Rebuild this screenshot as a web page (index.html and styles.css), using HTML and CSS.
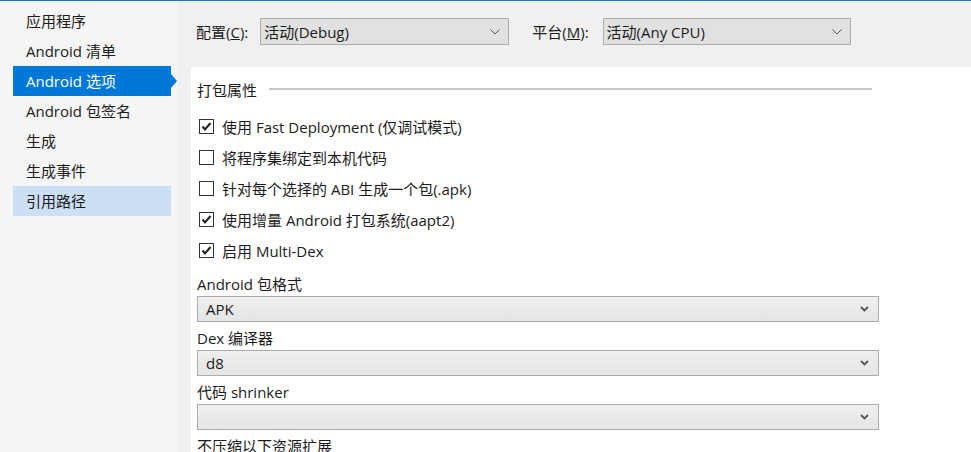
FILE: index.html
```html
<!DOCTYPE html>
<html lang="zh-CN">
<head>
<meta charset="utf-8">
<title>Android 选项</title>
<link rel="stylesheet" href="styles.css">
</head>
<body>
<div class="topline"></div>
<div class="app">
  <nav class="sidebar">
    <div class="nav-item">应用程序</div>
    <div class="nav-item">Android 清单</div>
    <div class="nav-item active">Android 选项</div>
    <div class="nav-item">Android 包签名</div>
    <div class="nav-item">生成</div>
    <div class="nav-item">生成事件</div>
    <div class="nav-item hover">引用路径</div>
  </nav>
  <main class="main">
    <div class="toolbar">
      <span class="tb-label">配置(<u>C</u>):</span>
      <div class="tb-select sel-config">
        <span>活动(Debug)</span>
        <svg class="tb-chev" width="10" height="6" viewBox="0 0 10 6"><polyline points="0.5,0.5 5,5 9.5,0.5" fill="none" stroke="#555" stroke-width="1"/></svg>
      </div>
      <span class="tb-label platform">平台(<u>M</u>):</span>
      <div class="tb-select sel-platform">
        <span>活动(Any CPU)</span>
        <svg class="tb-chev" width="10" height="6" viewBox="0 0 10 6"><polyline points="0.5,0.5 5,5 9.5,0.5" fill="none" stroke="#555" stroke-width="1"/></svg>
      </div>
    </div>
    <div class="rule"></div>
    <div class="panel">
      <div class="section-head">
        <span>打包属性</span>
        <div class="section-line"></div>
      </div>
      <div class="check-row">
        <span class="box checked"><svg width="13" height="13" viewBox="0 0 13 13"><polyline points="2.5,6.5 5,9.5 10.5,3" fill="none" stroke="#222" stroke-width="2"/></svg></span>
        <span class="check-text">使用 Fast Deployment (仅调试模式)</span>
      </div>
      <div class="check-row">
        <span class="box"></span>
        <span class="check-text">将程序集绑定到本机代码</span>
      </div>
      <div class="check-row">
        <span class="box"></span>
        <span class="check-text">针对每个选择的 ABI 生成一个包(.apk)</span>
      </div>
      <div class="check-row">
        <span class="box checked"><svg width="13" height="13" viewBox="0 0 13 13"><polyline points="2.5,6.5 5,9.5 10.5,3" fill="none" stroke="#222" stroke-width="2"/></svg></span>
        <span class="check-text">使用增量 Android 打包系统(aapt2)</span>
      </div>
      <div class="check-row">
        <span class="box checked"><svg width="13" height="13" viewBox="0 0 13 13"><polyline points="2.5,6.5 5,9.5 10.5,3" fill="none" stroke="#222" stroke-width="2"/></svg></span>
        <span class="check-text">启用 Multi-Dex</span>
      </div>

      <div class="fields">
        <div class="field-label">Android 包格式</div>
        <div class="dd"><span>APK</span><svg class="dd-chev" width="9" height="6" viewBox="0 0 9 6"><polyline points="1,1 4.5,4.5 8,1" fill="none" stroke="#555" stroke-width="1.8"/></svg></div>
        <div class="field-label">Dex 编译器</div>
        <div class="dd"><span>d8</span><svg class="dd-chev" width="9" height="6" viewBox="0 0 9 6"><polyline points="1,1 4.5,4.5 8,1" fill="none" stroke="#555" stroke-width="1.8"/></svg></div>
        <div class="field-label">代码 shrinker</div>
        <div class="dd"><span></span><svg class="dd-chev" width="9" height="6" viewBox="0 0 9 6"><polyline points="1,1 4.5,4.5 8,1" fill="none" stroke="#555" stroke-width="1.8"/></svg></div>
        <div class="field-label">不压缩以下资源扩展</div>
      </div>
    </div>
  </main>
</div>
</body>
</html>
```

FILE: styles.css
```css
* { box-sizing: border-box; }
html, body {
  margin: 0;
  padding: 0;
  width: 971px;
  height: 452px;
  overflow: hidden;
  background: #f0f0f0;
  font-family: "Open Sans", "Noto Sans CJK SC", sans-serif;
  font-size: 15px;
  color: #1b1b1b;
}
.topline {
  height: 1px;
  background: #0078d7;
}
.app {
  display: flex;
  height: 451px;
}
.sidebar {
  width: 177px;
  flex: none;
  background: #f5f5f5;
  padding-top: 5px;
}
.nav-item {
  margin-left: 13px;
  width: 158px;
  height: 30px;
  line-height: 30px;
  padding-left: 13px;
  white-space: nowrap;
  position: relative;
}
.nav-item.active {
  background: #0078d7;
  color: #fff;
}
.nav-item.active::after {
  content: "";
  position: absolute;
  right: -6px;
  top: 8px;
  border-style: solid;
  border-width: 7px 0 7px 6px;
  border-color: transparent transparent transparent #0078d7;
}
.nav-item.hover {
  background: #cce0f5;
}
.main {
  flex: 1;
  display: flex;
  flex-direction: column;
  background: #f0f0f0;
  min-width: 0;
}
.toolbar {
  display: flex;
  align-items: center;
  padding: 17px 0 16px 19px;
  height: 60px;
}
.tb-label {
  white-space: nowrap;
  margin-right: 12px;
}
.tb-label.platform {
  margin-left: 23px;
  margin-right: 14px;
}
.tb-select {
  height: 27px;
  background: #e1e1e1;
  border: 1px solid #adadad;
  display: flex;
  align-items: center;
  justify-content: space-between;
  padding: 0 8px 0 3px;
  white-space: nowrap;
}
.sel-config { width: 249px; }
.sel-platform { width: 248px; }
.tb-chev { flex: none; }
.rule {
  margin-left: 15px;
  height: 1px;
  background: #a0a0a0;
}
.panel {
  margin-top: 6px;
  margin-left: 14px;
  flex: 1;
  background: #fff;
  padding-left: 6px;
}
.section-head {
  margin-top: 12px;
  width: 675px;
  height: 20px;
  display: flex;
  align-items: center;
}
.section-line {
  flex: 1;
  height: 2px;
  background: #c6c6c6;
  margin-left: 12px;
}
.check-row {
  margin-top: 0;
  height: 31px;
  display: flex;
  align-items: center;
}
.section-head + .check-row { margin-top: 12px; }
.box {
  margin-left: 2px;
  width: 15px;
  height: 15px;
  border: 1px solid #333;
  background: #fff;
  display: flex;
  align-items: center;
  justify-content: center;
  flex: none;
}
.check-text {
  margin-left: 8px;
  white-space: nowrap;
}
.fields {
  margin-top: 6px;
  width: 682px;
}
.field-label {
  height: 24px;
  line-height: 24px;
  white-space: nowrap;
}
.dd {
  height: 26px;
  border: 1px solid #acacac;
  background: linear-gradient(#efefef, #e5e5e5);
  display: flex;
  align-items: center;
  justify-content: space-between;
  padding: 0 9px 0 8px;
  margin-bottom: 4px;
}
.dd-chev { flex: none; }
```
